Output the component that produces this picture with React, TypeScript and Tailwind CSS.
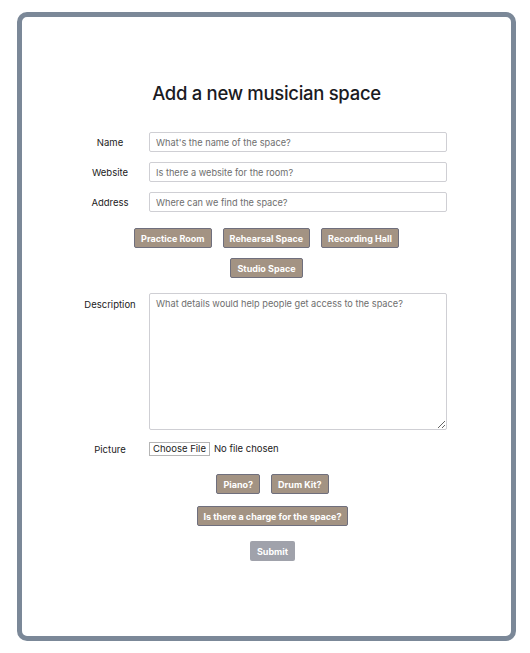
import React from 'react'

const tagBtn =
  'h-[20px] px-[6px] bg-[#a39383] border border-[#6f6f7d] rounded-[2px] text-white text-[9px] font-bold leading-none'

export default function App() {
  const fields = [
    { label: 'Name', placeholder: "What's the name of the space?" },
    { label: 'Website', placeholder: 'Is there a website for the room?' },
    { label: 'Address', placeholder: 'Where can we find the space?' },
  ]
  const spaces = ['Practice Room', 'Rehearsal Space', 'Recording Hall', 'Studio Space']

  return (
    <div className="min-h-screen bg-white pt-[12px] pl-[17px] font-['Inter',sans-serif] text-[#222]">
      <div className="w-[499px] h-[629px] border-[5px] border-[#7b8898] rounded-[10px] flex flex-col">
        <h1 className="pt-[62px] text-center text-[18.5px] leading-[28px] font-medium tracking-[-0.3px] text-[#1b1b1f]">
          Add a new musician space
        </h1>

        <div className="mt-[25px] ml-[58px] grid grid-cols-[60px_298px] gap-x-[9px] gap-y-[10px] items-center">
          {fields.map((f) => (
            <React.Fragment key={f.label}>
              <label className="text-center text-[9.5px] pt-[2px] text-[#222]">{f.label}</label>
              <input
                className="h-[20px] w-[298px] border border-[#cfcfd4] rounded-[2px] px-[6px] text-[9.2px] outline-none placeholder:text-[#6e6e6e]"
                placeholder={f.placeholder}
              />
            </React.Fragment>
          ))}
        </div>

        <div className="mt-[16px] w-[300px] mx-auto flex flex-wrap justify-center gap-x-[11px] gap-y-[10px]">
          {spaces.map((s) => (
            <button key={s} className={tagBtn}>
              {s}
            </button>
          ))}
        </div>

        <div className="mt-[15px] ml-[58px] grid grid-cols-[60px_298px] gap-x-[9px] items-start">
          <label className="text-center text-[9.5px] pt-[5px]">Description</label>
          <textarea
            className="h-[137px] w-[298px] border border-[#cfcfd4] rounded-[2px] px-[6px] py-[3px] text-[9.2px] outline-none placeholder:text-[#6e6e6e]"
            placeholder="What details would help people get access to the space?"
          />
        </div>

        <div className="mt-[11px] ml-[58px] grid grid-cols-[60px_298px] gap-x-[9px] items-center">
          <label className="text-center text-[9.5px] pt-[2px]">Picture</label>
          <div className="flex items-center gap-[4px] text-[9.5px]">
            <span className="h-[14px] px-[3px] border border-[#b5b5b5] bg-white flex items-center leading-none">
              Choose File
            </span>
            <span className="leading-none">No file chosen</span>
          </div>
        </div>

        <div className="mt-[17px] pl-[12px] flex justify-center gap-x-[11px]">
          <button className={tagBtn}>Piano?</button>
          <button className={tagBtn}>Drum Kit?</button>
        </div>

        <div className="mt-[12px] pl-[12px] flex justify-center">
          <button className={tagBtn}>Is there a charge for the space?</button>
        </div>

        <div className="mt-[15px] pl-[12px] flex justify-center">
          <button className="h-[20px] px-[7px] bg-[#a0a2ab] rounded-[2px] text-white text-[9px] font-bold leading-none">
            Submit
          </button>
        </div>
      </div>
    </div>
  )
}
